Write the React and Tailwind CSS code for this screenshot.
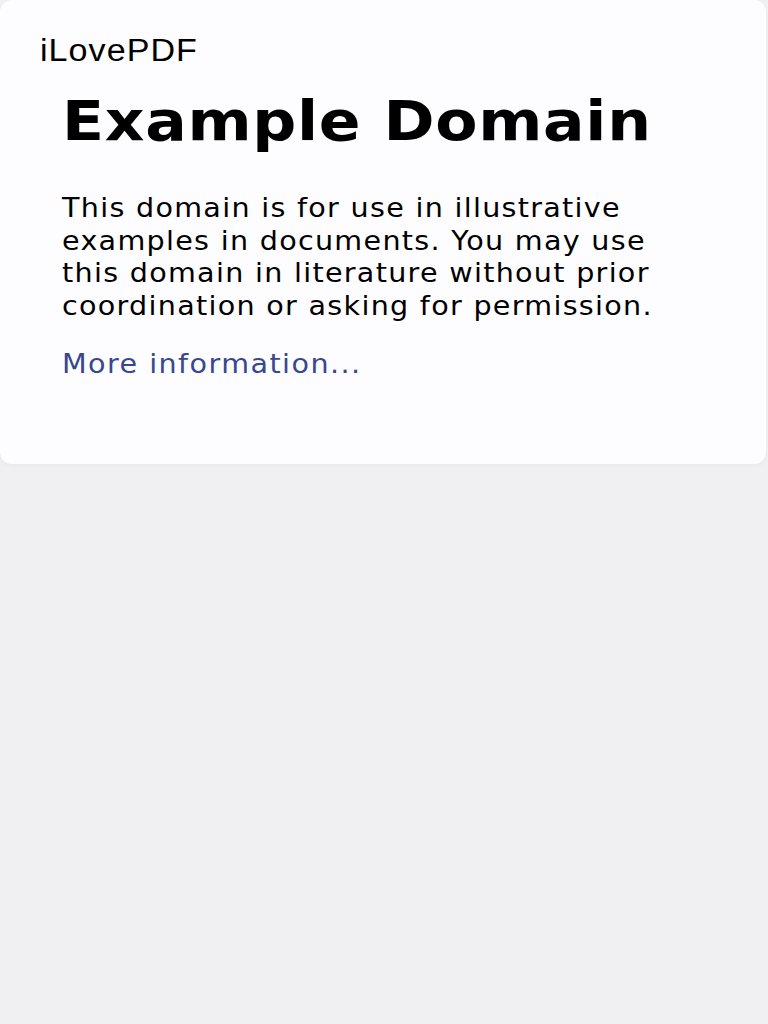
export default function App() {
  return (
    <div className="min-h-screen bg-[#f0f0f2] overflow-hidden">
      <div className="bg-[#fdfdff] rounded-xl shadow-[0_2px_6px_rgba(0,0,0,0.03)] h-[464px] mr-[2px] pt-[33px] pl-[40px]">
        <div className="w-fit font-['Liberation_Sans',Arial,sans-serif] text-[31px] leading-[36px] tracking-[0.03em] text-black scale-x-[1.1] origin-left">iLovePDF</div>
        <div className="pl-[22px] pt-[20px] font-['DejaVu_Sans',sans-serif] text-black">
          <h1 className="w-fit text-[56px] leading-[64px] font-bold tracking-[0.011em] scale-x-[1.1] origin-left">Example Domain</h1>
          <p className="mt-[39px] text-[26px] leading-[32.5px] tracking-[0.045em] w-[560px] scale-x-[1.1] origin-left">
            This domain is for use in illustrative examples in documents. You may use this domain in literature without prior coordination or asking for permission.
          </p>
          <p className="w-fit mt-[26px] text-[26px] leading-[32.5px] tracking-[0.05em] scale-x-[1.1] origin-left">
            <a href="#" className="text-[#38488f]">More information...</a>
          </p>
        </div>
      </div>
    </div>
  )
}
